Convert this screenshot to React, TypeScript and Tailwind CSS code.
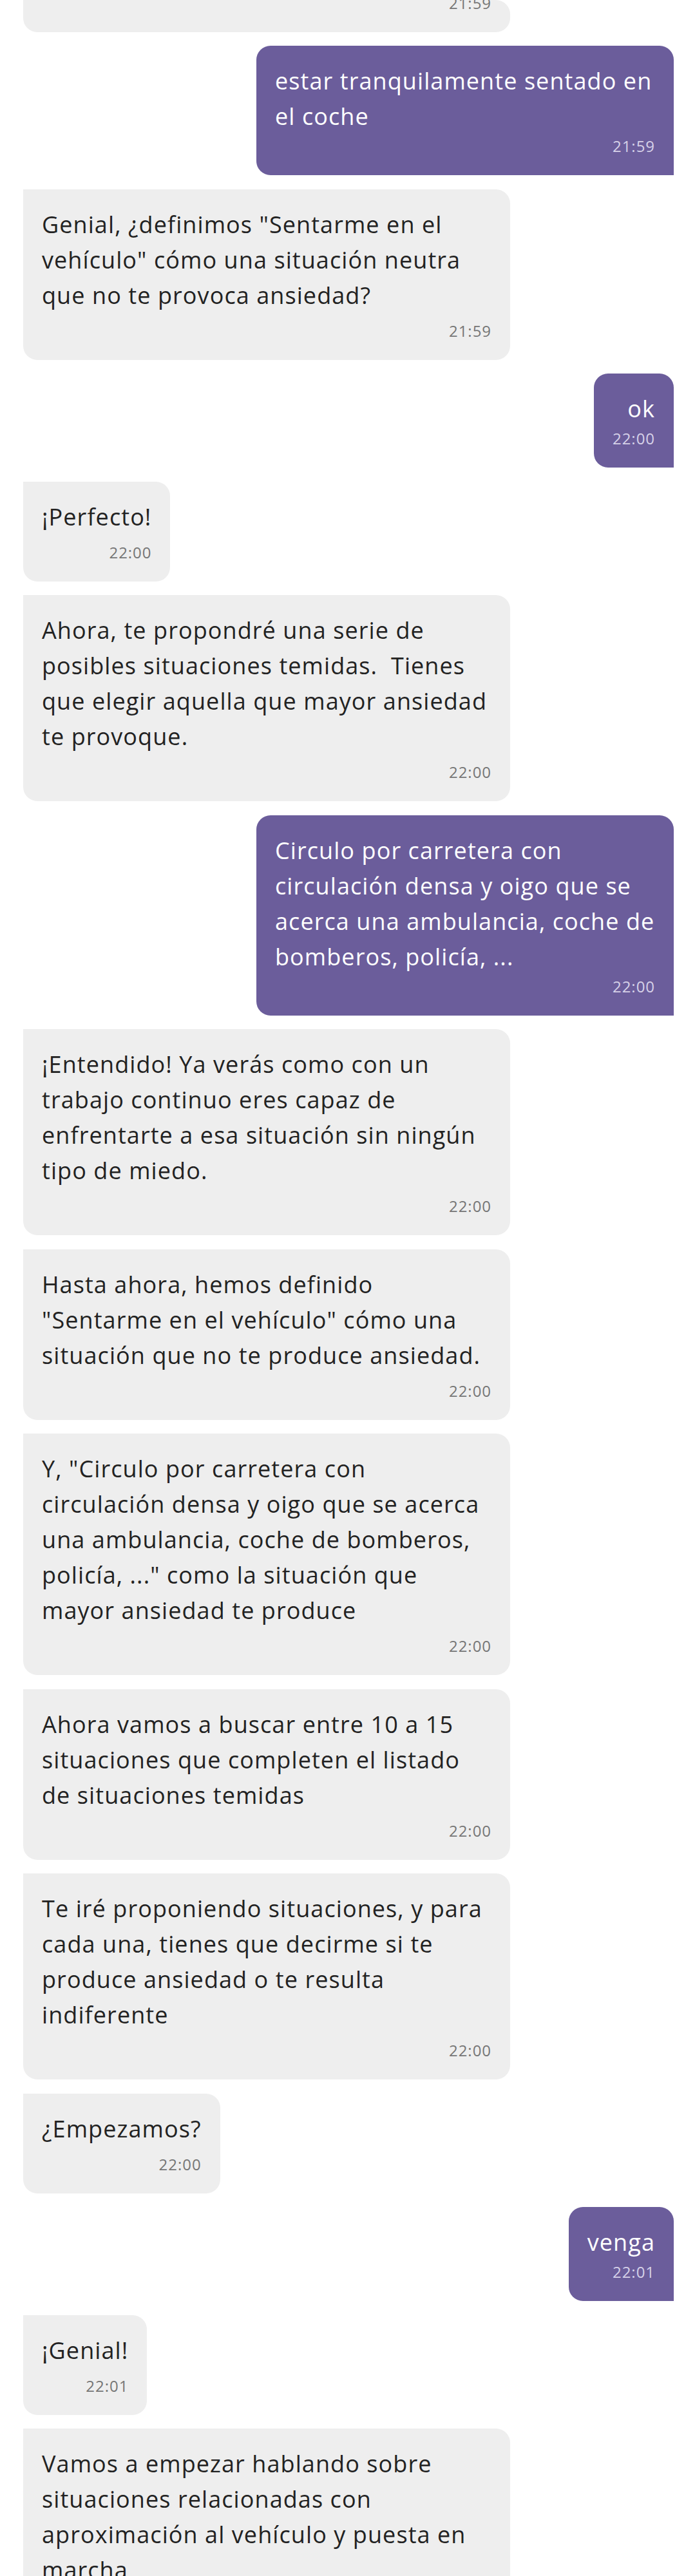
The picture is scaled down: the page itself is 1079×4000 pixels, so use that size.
import React from "react";

type Msg = { side: "in" | "out"; lines: string[]; time: string };

const msgs: Msg[] = [
  { side: "out", lines: ["estar tranquilamente sentado en", "el coche"], time: "21:59" },
  {
    side: "in",
    lines: ['Genial, ¿definimos "Sentarme en el', 'vehículo" cómo una situación neutra', "que no te provoca ansiedad?"],
    time: "21:59",
  },
  { side: "out", lines: ["ok"], time: "22:00" },
  { side: "in", lines: ["¡Perfecto!"], time: "22:00" },
  {
    side: "in",
    lines: [
      "Ahora, te propondré una serie de",
      "posibles situaciones temidas.  Tienes",
      "que elegir aquella que mayor ansiedad",
      "te provoque.",
    ],
    time: "22:00",
  },
  {
    side: "out",
    lines: ["Circulo por carretera con", "circulación densa y oigo que se", "acerca una ambulancia, coche de", "bomberos, policía, ..."],
    time: "22:00",
  },
  {
    side: "in",
    lines: [
      "¡Entendido! Ya verás como con un",
      "trabajo continuo eres capaz de",
      "enfrentarte a esa situación sin ningún",
      "tipo de miedo.",
    ],
    time: "22:00",
  },
  {
    side: "in",
    lines: ["Hasta ahora, hemos definido", '"Sentarme en el vehículo" cómo una', "situación que no te produce ansiedad."],
    time: "22:00",
  },
  {
    side: "in",
    lines: [
      'Y, "Circulo por carretera con',
      "circulación densa y oigo que se acerca",
      "una ambulancia, coche de bomberos,",
      'policía, ..." como la situación que',
      "mayor ansiedad te produce",
    ],
    time: "22:00",
  },
  {
    side: "in",
    lines: ["Ahora vamos a buscar entre 10 a 15", "situaciones que completen el listado", "de situaciones temidas"],
    time: "22:00",
  },
  {
    side: "in",
    lines: [
      "Te iré proponiendo situaciones, y para",
      "cada una, tienes que decirme si te",
      "produce ansiedad o te resulta",
      "indiferente",
    ],
    time: "22:00",
  },
  { side: "in", lines: ["¿Empezamos?"], time: "22:00" },
  { side: "out", lines: ["venga"], time: "22:01" },
  { side: "in", lines: ["¡Genial!"], time: "22:01" },
  {
    side: "in",
    lines: [
      "Vamos a empezar hablando sobre",
      "situaciones relacionadas con",
      "aproximación al vehículo y puesta en",
      "marcha",
    ],
    time: "22:01",
  },
];

function Bubble({ m }: { m: Msg }) {
  const out = m.side === "out";
  const wide = m.lines.length > 1;
  const base = out
    ? "self-end mr-[33px] bg-[#6b5d9b] text-white rounded-[22px] rounded-br-none"
    : "self-start ml-[36px] bg-[#eeeeee] text-[#222222] rounded-[22px] rounded-tl-none";
  const width = wide ? (out ? "w-[648px]" : "w-[756px]") : "";
  return (
    <div className={`${base} ${width} flex flex-col px-[29px] pt-[27px] pb-[30px]`}>
      <div
        className={`text-[36px] leading-[55px] tracking-[0.03em] whitespace-pre ${
          out && !wide ? "self-end" : "self-start"
        }`}
      >
        {m.lines.map((l, i) => (
          <div key={i}>{l}</div>
        ))}
      </div>
      <div
        className={`text-right text-[24px] leading-[30px] tracking-[0.04em] ${
          out ? "mt-[4px] text-[#d6d1e8]" : "mt-[13px] text-[#767676]"
        }`}
      >
        {m.time}
      </div>
    </div>
  );
}

export default function App() {
  return (
    <div className="min-h-screen w-[1079px] bg-white font-['Open_Sans',sans-serif] overflow-hidden">
      <div className="flex flex-col gap-[21.5px]">
        <div className="self-start ml-[36px] w-[756px] h-[49.5px] overflow-hidden bg-[#eeeeee] rounded-b-[22px] rounded-tr-[22px] flex flex-col justify-end px-[29px] pb-[30px]">
          <div className="text-right text-[24px] leading-[30px] tracking-[0.04em] text-[#767676] shrink-0">21:59</div>
        </div>
        {msgs.map((m, i) => (
          <Bubble key={i} m={m} />
        ))}
      </div>
    </div>
  );
}
